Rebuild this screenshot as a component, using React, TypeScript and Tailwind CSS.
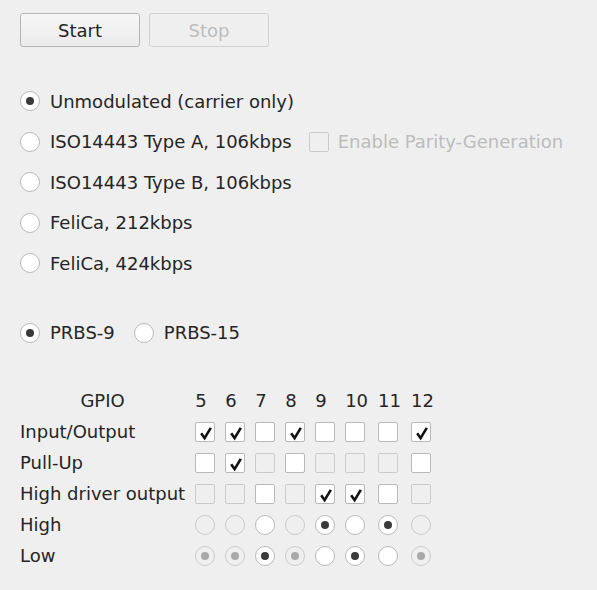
import React from "react";

type BoxState = "on" | "off" | "dis";
type RadioState = "on" | "off" | "dis" | "dison";

function Check() {
  return (
    <svg width="20" height="20" viewBox="0 0 20 20" className="absolute left-0 top-0">
      <path d="M5.2 10.2 L8.6 15.2 L14.8 4.8" fill="none" stroke="#111" strokeWidth="2.6" strokeLinejoin="miter" />
    </svg>
  );
}

function Box({ state, checked }: { state: BoxState; checked?: boolean }) {
  const on = state === "on" || checked;
  return (
    <span
      className={`relative block h-[20px] w-[20px] shrink-0 rounded-[2px] border ${
        state === "dis" ? "border-[#cbcbcb] bg-[#efefef]" : "border-[#b9b9b9] bg-white"
      }`}
    >
      {on && <Check />}
    </span>
  );
}

function Radio({ state }: { state: RadioState }) {
  const disabled = state === "dis" || state === "dison";
  return (
    <span
      className={`flex h-[20px] w-[20px] shrink-0 items-center justify-center rounded-full border ${
        disabled ? "border-[#cbcbcb] bg-[#efefef]" : "border-[#b9b9b9] bg-white"
      }`}
    >
      {state === "on" && <span className="h-[8px] w-[8px] rounded-full bg-[#3a3a3a]" />}
      {state === "dison" && <span className="h-[8px] w-[8px] rounded-full bg-[#a9a9a9]" />}
    </span>
  );
}

const cols = ["5", "6", "7", "8", "9", "10", "11", "12"];

const rows: { label: string; kind: "box" | "radio"; cells: string[] }[] = [
  { label: "Input/Output", kind: "box", cells: ["on", "on", "off", "on", "off", "off", "off", "on"] },
  { label: "Pull-Up", kind: "box", cells: ["off", "on", "dis", "off", "dis", "dis", "dis", "off"] },
  { label: "High driver output", kind: "box", cells: ["dis", "dis", "off", "dis", "on", "on", "off", "dis"] },
  { label: "High", kind: "radio", cells: ["dis", "dis", "off", "dis", "on", "off", "on", "dis"] },
  { label: "Low", kind: "radio", cells: ["dison", "dison", "on", "dison", "off", "on", "off", "dison"] },
];

const modes = [
  "Unmodulated (carrier only)",
  "ISO14443 Type A, 106kbps",
  "ISO14443 Type B, 106kbps",
  "FeliCa, 212kbps",
  "FeliCa, 424kbps",
];

export default function App() {
  return (
    <div
      className="h-[590px] w-[597px] bg-[#efefef] pl-[20px] pt-[13px] text-[18px] text-[#252525]"
      style={{ fontFamily: '"DejaVu Sans", sans-serif' }}
    >
      {/* Start / Stop */}
      <div className="flex h-[34px] gap-[9px]">
        <button className="h-[34px] w-[120px] rounded-[3px] border border-[#b5b5b5] bg-gradient-to-b from-[#f7f7f7] to-[#ebebeb] text-[#252525]">
          Start
        </button>
        <button
          disabled
          className="h-[34px] w-[120px] rounded-[3px] border border-[#d2d2d2] bg-[#efefef] text-[#bdbdbd]"
        >
          Stop
        </button>
      </div>

      {/* Modulation */}
      <div className="mt-[34px] flex flex-col">
        {modes.map((m, i) => (
          <div key={m} className="flex h-[40.5px] items-center">
            <Radio state={i === 0 ? "on" : "off"} />
            <span className="ml-[10px] whitespace-nowrap">{m}</span>
            {i === 1 && (
              <>
                <span className="ml-[17px]">
                  <Box state="dis" />
                </span>
                <span className="ml-[9px] whitespace-nowrap text-[#bcbcbc]">
                  Enable Parity-Generation
                </span>
              </>
            )}
          </div>
        ))}
      </div>

      {/* PRBS */}
      <div className="mt-[29px] flex h-[40.5px] items-center">
        <Radio state="on" />
        <span className="ml-[10px]">PRBS-9</span>
        <span className="ml-[19px]">
          <Radio state="off" />
        </span>
        <span className="ml-[10px]">PRBS-15</span>
      </div>

      {/* GPIO */}
      <div className="mt-[32px] grid w-max auto-rows-[31px] grid-cols-[repeat(9,auto)] items-center justify-items-start gap-x-[10px]">
        <span className="justify-self-center">GPIO</span>
        {cols.map((c) => (
          <span key={c}>{c}</span>
        ))}
        {rows.map((r) => (
          <React.Fragment key={r.label}>
            <span className="whitespace-nowrap">{r.label}</span>
            {r.cells.map((s, j) =>
              r.kind === "box" ? (
                <Box key={j} state={s as BoxState} />
              ) : (
                <Radio key={j} state={s as RadioState} />
              )
            )}
          </React.Fragment>
        ))}
      </div>
    </div>
  );
}
